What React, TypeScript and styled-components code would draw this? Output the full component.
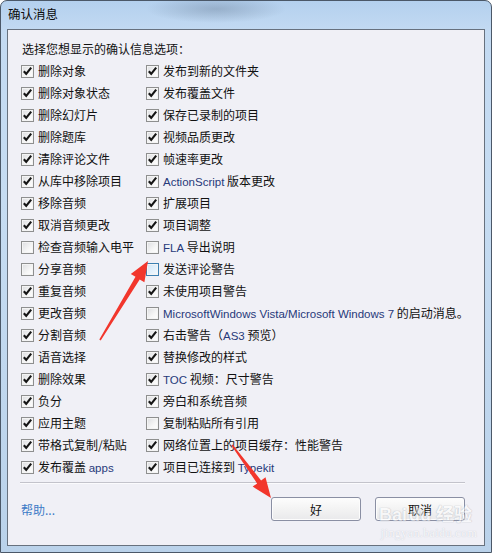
import styled, { createGlobalStyle } from 'styled-components';

const GlobalStyle = createGlobalStyle`
  html, body { margin: 0; padding: 0; background: #fff; }
  body {
    font-family: "Noto Sans", "Noto Sans CJK SC", sans-serif;
    font-size: 12px;
  }
`;

type Item = { label: string; checked: boolean; hot?: boolean };

const leftItems: Item[] = [
  { label: '删除对象', checked: true },
  { label: '删除对象状态', checked: true },
  { label: '删除幻灯片', checked: true },
  { label: '删除题库', checked: true },
  { label: '清除评论文件', checked: true },
  { label: '从库中移除项目', checked: true },
  { label: '移除音频', checked: true },
  { label: '取消音频更改', checked: true },
  { label: '检查音频输入电平', checked: false },
  { label: '分享音频', checked: false },
  { label: '重复音频', checked: true },
  { label: '更改音频', checked: true },
  { label: '分割音频', checked: true },
  { label: '语音选择', checked: true },
  { label: '删除效果', checked: true },
  { label: '负分', checked: true },
  { label: '应用主题', checked: true },
  { label: '带格式复制/粘贴', checked: true },
  { label: '发布覆盖 apps', checked: true },
];

const rightItems: Item[] = [
  { label: '发布到新的文件夹', checked: true },
  { label: '发布覆盖文件', checked: true },
  { label: '保存已录制的项目', checked: true },
  { label: '视频品质更改', checked: true },
  { label: '帧速率更改', checked: true },
  { label: 'ActionScript 版本更改', checked: true },
  { label: '扩展项目', checked: true },
  { label: '项目调整', checked: true },
  { label: 'FLA 导出说明', checked: false },
  { label: '发送评论警告', checked: false, hot: true },
  { label: '未使用项目警告', checked: true },
  { label: 'MicrosoftWindows Vista/Microsoft Windows 7 的启动消息。', checked: false },
  { label: '右击警告（AS3 预览）', checked: true },
  { label: '替换修改的样式', checked: true },
  { label: 'TOC 视频：尺寸警告', checked: true },
  { label: '旁白和系统音频', checked: true },
  { label: '复制粘贴所有引用', checked: false },
  { label: '网络位置上的项目缓存：性能警告', checked: true },
  { label: '项目已连接到 Typekit', checked: true },
];

// latin runs are drawn in the navy cleartype tint seen in the shot
function renderLabel(label: string) {
  return label.split(/([A-Za-z][A-Za-z0-9 ./]*[A-Za-z0-9])/).map((part, i) =>
    i % 2 === 1 ? <Latin key={i}>{part}</Latin> : <span key={i}>{part}</span>
  );
}

function CheckBox({ checked, hot }: { checked: boolean; hot?: boolean }) {
  return (
    <Box $hot={!!hot}>
      {checked && (
        <svg width="11" height="11" viewBox="0 0 11 11">
          <path d="M1.8 5.2 L4.2 7.8 L9.2 1.6" fill="none" stroke="#151515" strokeWidth="2.1" />
        </svg>
      )}
    </Box>
  );
}

function Column({ items, width }: { items: Item[]; width?: number }) {
  return (
    <List style={width ? { width } : undefined}>
      {items.map((it) => (
        <Row key={it.label}>
          <CheckBox checked={it.checked} hot={it.hot} />
          <Label>{renderLabel(it.label)}</Label>
        </Row>
      ))}
    </List>
  );
}

export default function App() {
  return (
    <>
      <GlobalStyle />
      <Window>
        <TitleBar>
          <TitleText>确认消息</TitleText>
        </TitleBar>
        <Client>
          <Heading>选择您想显示的确认信息选项：</Heading>
          <Columns>
            <Column items={leftItems} width={125} />
            <Column items={rightItems} />
          </Columns>
          <Separator />
          <Footer>
            <HelpLink>帮助...</HelpLink>
            <Buttons>
              <Button>好</Button>
              <Button>取消</Button>
            </Buttons>
          </Footer>
        </Client>

        <Watermark>
          <WatermarkBrand>Bai<WatermarkPaw>du</WatermarkPaw> 经验</WatermarkBrand>
          <WatermarkUrl>jingyan.baidu.com</WatermarkUrl>
        </Watermark>

        <Arrows width="492" height="553" viewBox="0 0 492 553">
          <polygon
            fill="#f2362c"
            points="99.3,339.6 100.7,340.4 139.7,279.4 144.4,282.3 148,261 130.8,273.9 135.5,276.8"
          />
          <polygon
            fill="#f2362c"
            points="231.4,445.5 232.6,444.5 261.1,480.4 265.5,477.2 271,498 252.7,486.6 257.1,483.4"
          />
        </Arrows>
      </Window>
    </>
  );
}

const Window = styled.div`
  position: relative;
  width: 492px;
  height: 553px;
  box-sizing: border-box;
  display: flex;
  flex-direction: column;
  border: 1px solid #4b5868;
  border-radius: 7px 7px 0 0;
  background:
    radial-gradient(ellipse 70px 14px at 215px 8px, rgba(90, 110, 135, 0.35), transparent),
    linear-gradient(180deg, #b4d0ee 0px, #c3daf2 30px, #c6dcf2 200px, #bad2ea 100%);
  overflow: hidden;
`;

const TitleBar = styled.div`
  height: 28px;
  display: flex;
  align-items: center;
  padding-left: 7px;
  flex-shrink: 0;
`;

const TitleText = styled.span`
  font-family: "Noto Sans CJK SC", sans-serif;
  font-size: 12.5px;
  color: #0c0c0c;
  line-height: 16px;
  margin-top: -2px;
`;

const Client = styled.div`
  flex: 1;
  margin: 0 6px 6px 6px;
  border: 1px solid #67717e;
  background: #f0f0f6;
  display: flex;
  flex-direction: column;
  padding: 11px 19px 0 13px;
`;

const Heading = styled.div`
  font-family: "Noto Sans CJK SC", sans-serif;
  font-size: 12px;
  line-height: 16px;
  color: #111;
  padding-left: 1px;
  margin-bottom: 3px;
`;

const Columns = styled.div`
  display: flex;
`;

const List = styled.div`
  display: flex;
  flex-direction: column;
  flex-shrink: 0;
`;

const Row = styled.div`
  height: 22px;
  display: flex;
  align-items: center;
  gap: 4px;
  white-space: nowrap;
`;

const Box = styled.span<{ $hot: boolean }>`
  width: 13px;
  height: 13px;
  box-sizing: border-box;
  display: flex;
  align-items: center;
  justify-content: center;
  border: 1px solid ${({ $hot }) => ($hot ? '#3c7fb1' : '#8e8f8f')};
  background: ${({ $hot }) =>
    $hot
      ? 'linear-gradient(135deg, #cfe6f8, #f4f9fe)'
      : 'linear-gradient(135deg, #dcdde0, #f6f6f6 60%, #ffffff)'};
  box-shadow: inset 0 0 0 1px #f4f4f4;
  flex-shrink: 0;
`;

const Label = styled.span`
  font-family: "Noto Sans CJK SC", sans-serif;
  font-size: 12px;
  line-height: 16px;
  color: #111;
`;

const Latin = styled.span`
  font-family: "Liberation Sans", "DejaVu Sans", sans-serif;
  font-size: 11.5px;
  color: #27397a;
`;

const Separator = styled.div`
  height: 1px;
  background: #c3c3cb;
  border-bottom: 1px solid #fbfbfd;
  margin: 4px 0 0 -1px;
`;

const Footer = styled.div`
  display: flex;
  align-items: center;
  justify-content: space-between;
  padding-top: 13px;
`;

const HelpLink = styled.span`
  font-family: "Noto Sans CJK SC", sans-serif;
  font-size: 12px;
  color: #3c7bc6;
  cursor: pointer;
`;

const Buttons = styled.div`
  display: flex;
  gap: 14px;
`;

const Button = styled.button`
  width: 90px;
  height: 24px;
  box-sizing: border-box;
  border: 1px solid #8a8fa3;
  border-radius: 3px;
  background: linear-gradient(180deg, #fdfdfd 0%, #f3f3f3 50%, #e9e9eb 100%);
  box-shadow: inset 0 0 0 1px #fcfcfc;
  font-family: "Noto Sans CJK SC", sans-serif;
  font-size: 12px;
  color: #111;
  padding: 0;
`;

const Watermark = styled.div`
  position: absolute;
  left: 378px;
  top: 503px;
  display: flex;
  flex-direction: column;
  align-items: flex-start;
  white-space: nowrap;
  pointer-events: none;
  opacity: 0.5;
`;

const WatermarkBrand = styled.span`
  font-family: "Liberation Sans", "Noto Sans CJK SC", sans-serif;
  font-size: 18px;
  font-weight: 700;
  color: #ffffff;
  line-height: 22px;
  text-shadow: 0 0 1px #8f96a6, 0 0 1px #8f96a6;
`;

const WatermarkPaw = styled.span`
  margin-left: 2px;
`;

const WatermarkUrl = styled.span`
  font-family: "Liberation Serif", serif;
  font-size: 12px;
  color: #ffffff;
  line-height: 14px;
  margin-left: 2px;
  letter-spacing: 0.4px;
  text-shadow: 0 0 1px #8f96a6;
`;

const Arrows = styled.svg`
  position: absolute;
  left: -1px;
  top: -1px;
  pointer-events: none;
`;
